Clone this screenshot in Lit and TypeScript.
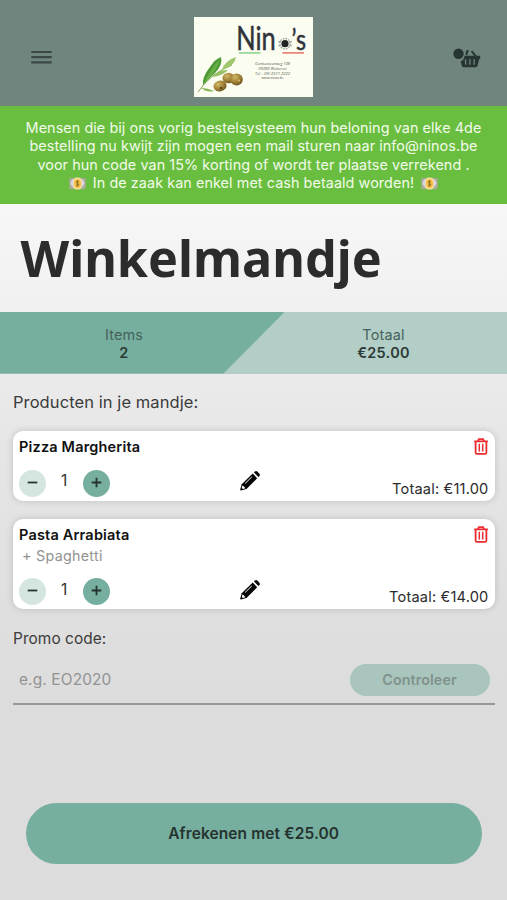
import { LitElement, html, css, svg, nothing } from "lit";
import { customElement, property } from "lit/decorators.js";

interface CartItem {
  name: string;
  extra?: string;
  quantity: number;
  total: string;
}

const cart: CartItem[] = [
  { name: "Pizza Margherita", quantity: 1, total: "€11.00" },
  { name: "Pasta Arrabiata", extra: "+ Spaghetti", quantity: 1, total: "€14.00" },
];

const trashIcon = html`<svg width="14" height="17" viewBox="0 0 14 17" fill="none" stroke="#ec2c30">
  <path d="M0.2 3.3H13.8M3.8 3.1L4.9 1.1H9.1L10.2 3.1" stroke-width="1.8" />
  <path d="M1.6 3.6V14.4Q1.6 15.9 3 15.9H11Q12.4 15.9 12.4 14.4V3.6" stroke-width="1.8" />
  <path d="M5.3 5.8V13.4M8.7 5.8V13.4" stroke-width="1.5" />
</svg>`;

const pencilIcon = html`<svg width="20" height="20" viewBox="0 0 20 20">
  <path d="M12.7 2.6L17.2 7.2L6.5 18.1L0.8 19.4Q0.1 19.4 0.2 18.7L1.7 13.2Z" fill="#050505" />
  <path d="M13.9 1.4L15 0.4Q16.1-0.4 17.3 0.5L19.4 2.7Q20.3 3.9 19.5 5L18.4 6.1Z" fill="#050505" />
  <path d="M5.2 12.4L11.8 5.9" stroke="#fff" stroke-width="1" />
  <path d="M2.4 14.6L3.6 15L4 16L5 16.4L5.4 17.2L2.9 17.9L1.8 16.9Z" fill="#fff" />
</svg>`;

const moneyIcon = html`<svg class="money" width="17" height="13" viewBox="0 0 17 13">
  <path d="M0.3 1.2L4 0.7L6 2V11L3.5 12.4L0.3 11.6Z" fill="#a8a99b" />
  <path d="M16.7 1.2L13 0.7L11 2V11L13.5 12.4L16.7 11.6Z" fill="#a8a99b" />
  <path d="M5.5 2Q1.8 2.2 1.5 6.5Q2.2 9.9 5.5 11Z" fill="#d9d3dc" />
  <path d="M11.5 2Q15.2 2.2 15.5 6.5Q14.8 9.9 11.5 11Z" fill="#d9d3dc" />
  <rect x="4.3" y="0.5" width="8.4" height="12" rx="3.5" fill="#f6dfa0" />
  <ellipse cx="8.5" cy="6.5" rx="3.4" ry="4.6" fill="#f2bd3d" />
  <path d="M10 4.8Q8.5 3.7 7.4 4.8Q7 6 8.5 6.4Q10.2 6.9 9.7 8Q8.6 9.2 7 8.1M8.5 3.4V9.7" fill="none" stroke="#8e6b2b" stroke-width="0.9" />
</svg>`;

const leaf = (d: string, fill: string) => svg`<path d=${d} fill=${fill} />`;

@customElement("shop-logo")
class ShopLogo extends LitElement {
  static styles = css`
    :host { display: block; width: 119px; height: 80px; }
    svg { display: block; }
    .brand { font-family: Lato, "Open Sans", sans-serif; font-size: 33px; fill: #30343a; stroke: #30343a; stroke-width: 0.5px; }
    .brand.end { font-size: 29px; }
    .small { font-family: "Open Sans", sans-serif; font-style: italic; font-size: 4px; fill: #55594f; text-anchor: middle; }
  `;
  render() {
    return html`<svg width="119" height="80" viewBox="0 0 119 80">
      <defs>
        <radialGradient id="olive" cx="0.38" cy="0.32" r="0.75">
          <stop offset="0" stop-color="#d1b868" />
          <stop offset="0.55" stop-color="#a08035" />
          <stop offset="1" stop-color="#65501f" />
        </radialGradient>
      </defs>
      <rect width="119" height="80" fill="#fafdf0" />
      <path d="M4 75Q17 56 38 48" fill="none" stroke="#83a55a" stroke-width="1" />
      ${leaf("M9 68Q8 60 16 50Q21 42 27 40Q29 48 21 56Q14 62 9 68Z", "#4c9a35")}
      ${leaf("M10 67Q14 55 26 42Q22 56 10 67Z", "#68af48")}
      ${leaf("M28 53Q30 44 42 40Q41 49 28 53Z", "#a0c66e")}
      ${leaf("M18 60Q25 52 34 53Q28 59 18 60Z", "#98c065")}
      ${leaf("M7 71Q14 71 20 74Q13 76 7 71Z", "#85b554")}
      <ellipse cx="34.5" cy="61" rx="6" ry="5.3" fill="url(#olive)" />
      <ellipse cx="42.6" cy="62.4" rx="6.2" ry="6" fill="url(#olive)" />
      <ellipse cx="26" cy="69" rx="6.6" ry="5.4" transform="rotate(-12 26 69)" fill="url(#olive)" />
      <circle cx="27" cy="71" r="1" fill="#392d16" />
      <circle cx="45" cy="63.5" r="1" fill="#d5bb6b" />
      <text class="brand" x="42.2" y="33.3" textLength="39.5" lengthAdjust="spacingAndGlyphs">Nin</text>
      <text class="brand end" x="97.5" y="32.8" textLength="14.5" lengthAdjust="spacingAndGlyphs">’s</text>
      <rect x="45" y="35.2" width="21.5" height="1.4" fill="#80cc84" />
      <rect x="88.5" y="35.2" width="21.5" height="1.4" fill="#e7655f" />
      <circle cx="91" cy="26.7" r="5.2" fill="none" stroke="#9a9f9b" stroke-width="1.3" stroke-dasharray="1.7 1" />
      <circle cx="91" cy="26.7" r="3.6" fill="#1f2321" />
      <path d="M84 24.6H87M84 28.8H87M95 24.6H98M95 28.8H98" stroke="#9b9f9a" stroke-width="1" />
      <text class="small" x="78.5" y="48.3" textLength="35" lengthAdjust="spacingAndGlyphs">Gentsesteenweg 108</text>
      <text class="small" x="78.5" y="53" textLength="28" lengthAdjust="spacingAndGlyphs">09200 Wetteren</text>
      <text class="small" x="78.5" y="57.5" textLength="35" lengthAdjust="spacingAndGlyphs">Tel. : 09/ 2511 2222</text>
      <text class="small" x="78.5" y="62.2" textLength="22" lengthAdjust="spacingAndGlyphs">www.ninos.be</text>
    </svg>`;
  }
}

@customElement("cart-card")
class CartCard extends LitElement {
  @property({ attribute: false }) item!: CartItem;

  static styles = css`
    :host {
      display: flex; flex-direction: column; box-sizing: border-box;
      background: #fff; border-radius: 10px; padding: 6px 6.5px 4px 6px;
      box-shadow: 0 0 7px rgba(0, 0, 0, 0.16);
      color: #111;
    }
    .top { display: flex; justify-content: space-between; height: 20px; }
    .name { font-weight: 600; font-size: 14.5px; line-height: 20px; letter-spacing: 0.18px; }
    .top svg { display: block; margin: 1.5px 0 0; }
    .extra { padding-left: 3px; color: #929292; font-size: 14.3px; line-height: 21px; height: 19px; letter-spacing: 0.28px; }
    .bottom { display: grid; grid-template-columns: 1fr 20px 1fr; flex: 1; align-items: end; }
    .stepper { display: flex; align-items: flex-end; }
    .btn { display: grid; place-items: center; width: 27px; height: 27px; padding: 0; border: 0; border-radius: 50%; background: #76ae9f; }
    .btn.minus { background: #d5e6e0; }
    .btn svg { display: block; margin-top: -2px; }
    .qty { width: 36.5px; text-align: center; font-size: 15.5px; line-height: 19px; margin-bottom: 6.5px; color: #333; }
    .edit { height: 20px; margin: 0 3px 5.5px -4px; }
    .total { text-align: right; font-size: 14.6px; line-height: 18px; margin: 0 -0.5px -1px 0; color: #2c2c2c; letter-spacing: 0.18px; }
  `;

  render() {
    const { name, extra, quantity, total } = this.item;
    return html`
      <div class="top"><span class="name">${name}</span>${trashIcon}</div>
      ${extra ? html`<div class="extra">${extra}</div>` : nothing}
      <div class="bottom">
        <div class="stepper">
          <button class="btn minus" aria-label="Minder">
            <svg width="11" height="11" viewBox="0 0 11 11"><path d="M0.7 5.5H10.3" stroke="#26332f" stroke-width="1.8" /></svg>
          </button>
          <span class="qty">${quantity}</span>
          <button class="btn" aria-label="Meer">
            <svg width="11" height="11" viewBox="0 0 11 11"><path d="M0.7 5.5H10.3M5.5 0.7V10.3" stroke="#26332f" stroke-width="1.8" /></svg>
          </button>
        </div>
        <div class="edit">${pencilIcon}</div>
        <div class="total">Totaal: ${total}</div>
      </div>
    `;
  }
}

@customElement("app-root")
class AppRoot extends LitElement {
  static styles = css`
    :host {
      display: flex; flex-direction: column; height: 900px; overflow: hidden;
      font-family: Inter, "Liberation Sans", sans-serif;
      background: linear-gradient(#f7f7f8 204px, #f0f0f0 312px, #e6e6e6 440px, #dedede 640px, #dcdcdc 720px);
      color: #3b3b3b;
    }
    .header {
      display: grid; grid-template-columns: 1fr 119px 1fr; box-sizing: border-box;
      height: 106px; padding: 16.5px 26px 0 31px; background: #71857f;
    }
    .menu { margin-top: 33.5px; }
    .logo { margin-left: -2.5px; }
    .basket { justify-self: end; margin-top: 30px; }
    .header svg { display: block; }
    .banner {
      box-sizing: border-box; height: 98px; padding-top: 13px; background: #6abe3f; color: #f1fbe9;
      text-align: center; font-size: 14.4px; line-height: 18.3px; white-space: nowrap; letter-spacing: 0.06px;
      display: flex; flex-direction: column; align-items: center;
    }
    .cash { display: flex; align-items: center; gap: 6.5px; }
    h1 {
      margin: 0; height: 108px; line-height: 108px; padding-left: 20.5px; box-sizing: border-box;
      font-family: "Noto Sans", "Open Sans", sans-serif; font-weight: 700; font-size: 50.3px; color: #2c2c2c;
    }
    .summary {
      display: grid; grid-template-columns: 248px 1fr; height: 61.5px; text-align: center;
      background: #b3cec6; position: relative;
    }
    .shape { position: absolute; inset: 0; width: 100%; height: 100%; }
    .cell { position: relative; padding-top: 13.5px; font-size: 14.4px; line-height: 18.3px; color: #45635b; letter-spacing: 0.2px; }
    .cell + .cell { padding-right: 8px; padding-left: 20px; }
    .cell b { display: block; color: #2b3a36; font-weight: 600; letter-spacing: 0.35px; }
    .content { padding: 0 12.5px 0 13px; display: flex; flex-direction: column; }
    .label { font-size: 16.5px; line-height: 20px; margin-top: 18.5px; letter-spacing: 0.08px; }
    .cards { display: flex; flex-direction: column; gap: 18px; margin-top: 18.5px; }
    .short { height: 70px; }
    .tall { height: 90.5px; }
    .promo-label { font-size: 15.4px; margin-top: 20px; }
    .promo {
      display: flex; justify-content: space-between; align-items: center; box-sizing: border-box;
      height: 56px; padding: 7px 5px 0 6px; border-bottom: 2px solid #979797;
    }
    .placeholder { color: #929292; font-size: 15.4px; letter-spacing: 0.15px; }
    .check {
      width: 140px; height: 32px; border-radius: 16px; border: 0; background: #a9c5bd; color: #7f918b;
      font: 600 14.3px Inter, sans-serif; letter-spacing: 0.1px;
    }
    .pay {
      margin: 98px 25.5px 0 26px; height: 61px; flex: none; border: 0; border-radius: 31px; background: #76ae9f;
      color: #25332f; font: 600 15.5px Inter, sans-serif; letter-spacing: 0.1px;
    }
  `;

  render() {
    return html`
      <header class="header">
        <svg class="menu" width="21" height="14" viewBox="0 0 21 14" stroke="#3a4744" stroke-width="2.2">
          <path d="M0.3 2H20.7M0.3 7.2H20.7M0.3 12.3H20.7" />
        </svg>
        <shop-logo class="logo"></shop-logo>
        <svg class="basket" width="28" height="22" viewBox="0 0 28 22">
          <circle cx="5.5" cy="6.8" r="5.2" fill="#263532" />
          <path d="M13.4 8L14.2 4.2L15.6 3.9M18.6 4L22.8 9.4" fill="none" stroke="#263532" stroke-width="2" />
          <path d="M11.6 8.8H27.2V12H26.2L24.6 18.6Q24.2 20.2 22.4 20.2H10.8Q9.2 20.2 8.8 18.7L7.6 14.6Q11.2 12.8 11.6 8.8Z" fill="#263532" />
          <path d="M12.6 12.2V17.8M16.9 12.2V17.8M21.1 12.2V17.8" stroke="#71857f" stroke-width="1.3" />
        </svg>
      </header>
      <div class="banner">
        <span>Mensen die bij ons vorig bestelsysteem hun beloning van elke 4de</span>
        <span>bestelling nu kwijt zijn mogen een mail sturen naar info@ninos.be</span>
        <span>voor hun code van 15% korting of wordt ter plaatse verrekend .</span>
        <span class="cash">${moneyIcon}<span>In de zaak kan enkel met cash betaald worden!</span>${moneyIcon}</span>
      </div>
      <h1>Winkelmandje</h1>
      <section class="summary">
        <svg class="shape" viewBox="0 0 507 61.5" preserveAspectRatio="none"><path d="M0 0H284.5L223.5 61.5H0Z" fill="#76ae9f" /></svg>
        <div class="cell">Items<b>2</b></div>
        <div class="cell">Totaal<b>€25.00</b></div>
      </section>
      <main class="content">
        <div class="label">Producten in je mandje:</div>
        <div class="cards">
          ${cart.map((item) => html`<cart-card class=${item.extra ? "tall" : "short"} .item=${item}></cart-card>`)}
        </div>
        <div class="label promo-label">Promo code:</div>
        <div class="promo">
          <span class="placeholder">e.g. EO2020</span>
          <button class="check">Controleer</button>
        </div>
      </main>
      <button class="pay">Afrekenen met €25.00</button>
    `;
  }
}
